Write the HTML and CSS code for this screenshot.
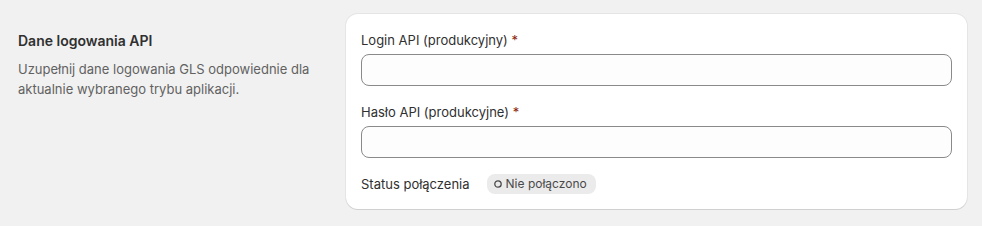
FILE: index.html
```html
<!DOCTYPE html>
<html lang="pl">
<head>
	<meta charset="UTF-8">
	<title>Dane logowania API</title>
	<link rel="stylesheet" href="styles.css">
</head>
<body>
<div class="section">
	<!-- opis sekcji -->
	<div class="annotation">
		<h2 class="title">Dane logowania API</h2>
		<p class="desc">Uzupełnij dane logowania GLS odpowiednie dla aktualnie wybranego trybu aplikacji.</p>
	</div>
	<!-- karta z polami -->
	<div class="card">
		<div class="field">
			<label class="label" for="login">Login API (produkcyjny) <span class="req">*</span></label>
			<input class="input" id="login" type="text">
		</div>
		<div class="field">
			<label class="label" for="haslo">Hasło API (produkcyjne) <span class="req">*</span></label>
			<input class="input" id="haslo" type="password">
		</div>
		<div class="status">
			<span class="status-label">Status połączenia</span>
			<span class="badge">
				<svg class="badge-icon" width="10" height="10" viewBox="0 0 10 10">
					<circle cx="5" cy="5" r="3.2" fill="none" stroke="#4a4a4a" stroke-width="1.3"/>
				</svg>
				Nie połączono
			</span>
		</div>
	</div>
</div>
</body>
</html>
```

FILE: styles.css
```css
body,
p,
h2 {
	margin: 0;
}

html,
body {
	height: 100%;
}

body {
	background: #f1f1f1;
	font: 13px/20px Inter, "Noto Sans", sans-serif;
	color: #303030;
}

.section {
	display: flex;
	gap: 16px;
	padding: 14px 15px 0 18px;
}

.annotation {
	flex: 0 0 312px;
	padding-top: 17px;
}

.title {
	font-size: 14px;
	line-height: 20px;
	font-weight: 600;
	color: #303030;
}

.desc {
	margin-top: 8px;
	color: #616161;
}

.card {
	flex: 1;
	display: flex;
	flex-direction: column;
	gap: 16px;
	padding: 16px 15px 15px 15px;
	background: #fff;
	border-radius: 12px;
	box-shadow: 0 1px 0 0 rgba(26, 26, 26, .1), 0 0 0 1px rgba(26, 26, 26, .05);
}

.field {
	display: flex;
	flex-direction: column;
	gap: 4px;
}

.label {
	color: #303030;
}

.req {
	color: #8e1f0b;
}

.input {
	box-sizing: border-box;
	height: 32px;
	width: 100%;
	margin: 0;
	padding: 0 12px;
	border: 1px solid #8a8a8a;
	border-radius: 8px;
	background: #fdfdfd;
	font: inherit;
	outline: none;
}

.status {
	display: flex;
	align-items: center;
	gap: 17px;
}

.badge {
	display: inline-flex;
	align-items: center;
	gap: 3px;
	height: 20px;
	padding: 0 9px 0 6px;
	border-radius: 8px;
	background: #ebebeb;
	font-size: 12px;
	color: #4a4a4a;
}
```
